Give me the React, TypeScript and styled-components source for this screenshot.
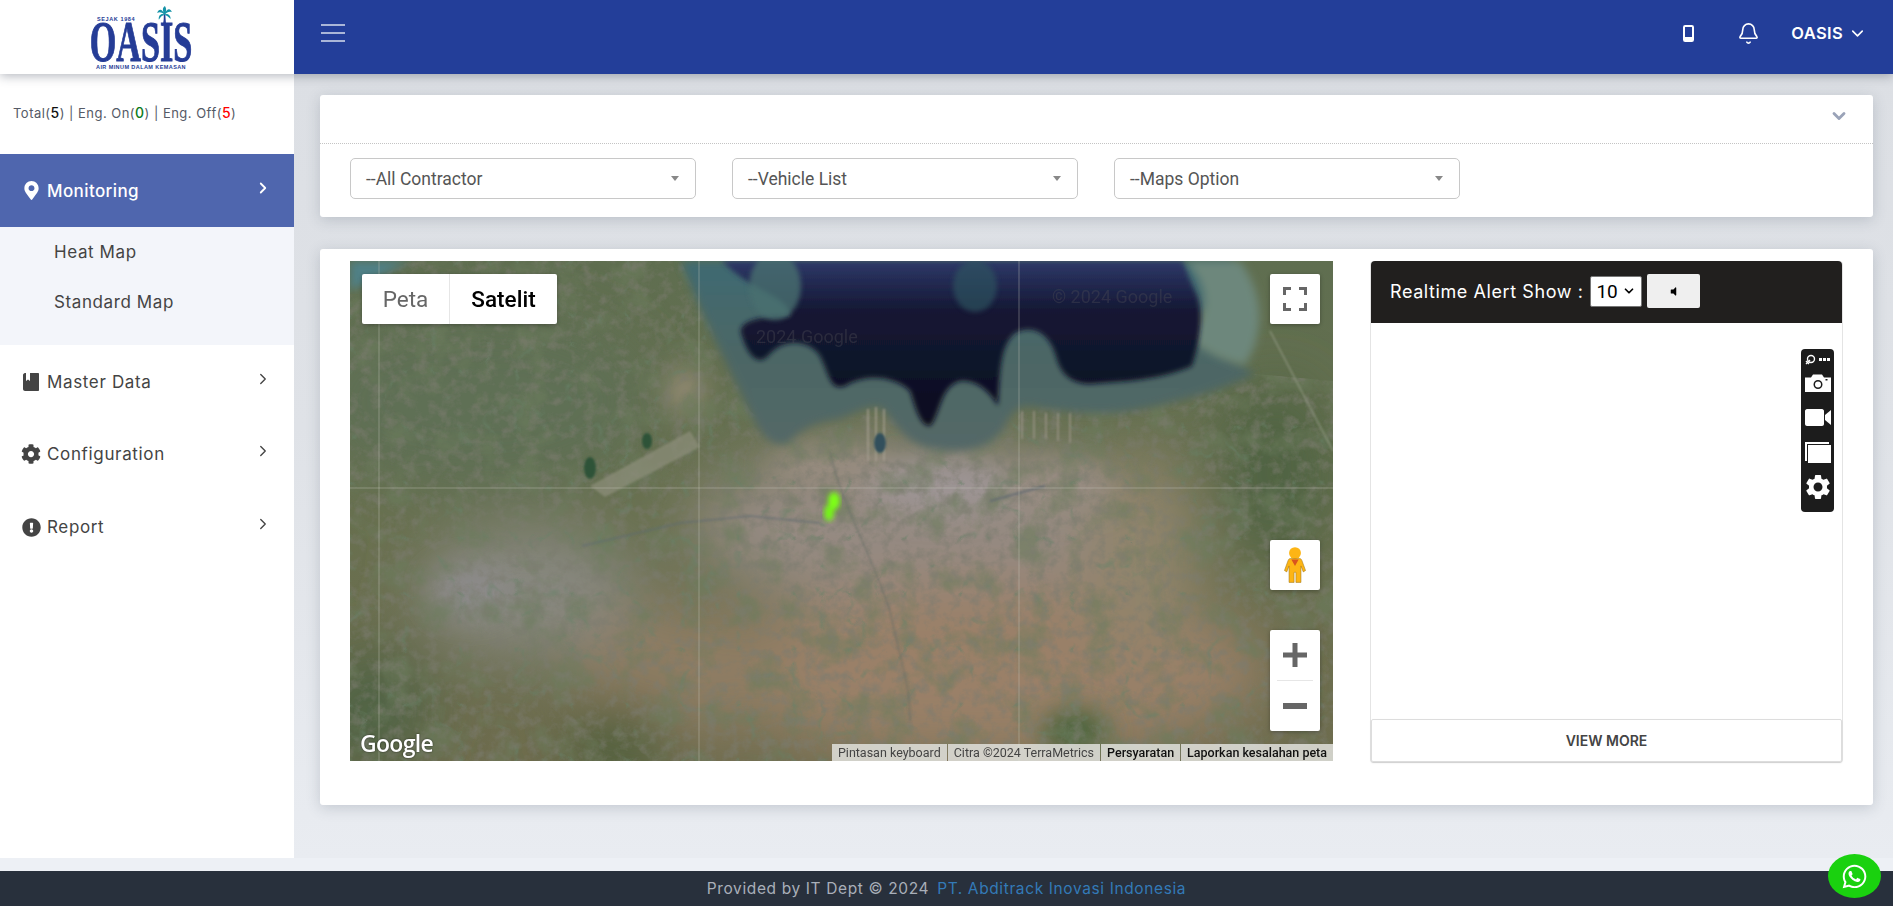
import styled, { createGlobalStyle } from "styled-components";
import { FaCog, FaExclamationCircle, FaMapMarkerAlt, FaVolumeOff, FaWhatsapp } from "react-icons/fa";
import { MdSettings } from "react-icons/md";
import { Bell, ChevronDown, ChevronRight } from "lucide-react";

const GlobalStyle = createGlobalStyle`
    html, body {
        margin: 0;
        padding: 0;
        height: 100%;
        overflow: hidden;
        font-family: Inter, "Open Sans", sans-serif;
    }
    * {
        box-sizing: border-box;
    }
`
const Page = styled.div`
    display: flex;
    flex-direction: column;
    width: 100vw;
    height: 100vh;
    background-color: #edf0f5;
`
const TopBar = styled.header`
    display: flex;
    flex: 0 0 74px;
    position: relative;
    z-index: 3;
    box-shadow: 0 2px 10px rgba(40, 50, 70, 0.35);
`
const LogoBox = styled.div`
    display: flex;
    justify-content: center;
    align-items: center;
    width: 294px;
    padding-right: 12px;
    background-color: #fff;
`
const Logo = styled.div`
    display: flex;
    flex-direction: column;
    width: 104px;
    margin-top: 1px;
    color: #253c96;
`
const LogoTop = styled.div`
    display: flex;
    align-items: flex-end;
    justify-content: space-between;
    height: 16px;
    padding: 0 20px 0 8px;
`
const LogoSmall = styled.span`
    font-family: "Liberation Sans", sans-serif;
    font-size: 5.5px;
    font-weight: 700;
    letter-spacing: 0.6px;
    white-space: nowrap;
`
const LogoWord = styled.div`
    width: 172px;
    height: 39px;
    margin-left: -34px;
    font-family: "Liberation Serif", serif;
    font-size: 57px;
    line-height: 39px;
    font-weight: 700;
    text-align: center;
    white-space: nowrap;
    -webkit-text-stroke: 1px #253c96;
    transform: scaleX(0.6);
    transform-origin: center;
`
const LogoTag = styled(LogoSmall)`
    margin-top: 3px;
    line-height: 6px;
    text-align: center;
    letter-spacing: 0.42px;
`
const NavBar = styled.div`
    display: flex;
    flex: 1;
    align-items: center;
    justify-content: space-between;
    padding: 0 26px 0 27px;
    background-color: #233e99;
    color: #fff;
`
const Hamburger = styled.div`
    display: flex;
    flex-direction: column;
    gap: 6px;
    width: 24px;
    margin-top: -9px;

    span {
        display: block;
        height: 2px;
        background-color: #aab6d8;
    }
`
const NavRight = styled.div`
    display: flex;
    align-items: center;
    margin-top: -8px;
`
const NavIcon = styled.span<{ $gap: number }>`
    display: flex;
    margin-right: ${(p) => p.$gap}px;
`
const UserName = styled.span`
    margin-right: 5px;
    font-size: 16.5px;
    font-weight: 600;
    letter-spacing: 0.35px;
`
const Body = styled.div`
    display: flex;
    flex: 1;
    min-height: 0;
`
const Sidebar = styled.aside`
    display: flex;
    flex-direction: column;
    flex: 0 0 294px;
    background-color: #fff;
    color: #444;
    position: relative;
    z-index: 2;
`
const Counter = styled.div`
    height: 80px;
    padding: 30px 0 0 13px;
    font-size: 13px;
    line-height: 18px;
    letter-spacing: 0.48px;
    color: #555a66;
    white-space: nowrap;
`
const Count = styled.span<{ $color: string }>`
    font-size: 14px;
    font-weight: 500;
    color: ${(p) => p.$color};
`
const MenuItem = styled.div<{ $active?: boolean; $height: number }>`
    display: flex;
    align-items: center;
    height: ${(p) => p.$height}px;
    padding: 0 22px 0 21px;
    font-size: 17px;
    font-weight: ${(p) => (p.$active ? 500 : 400)};
    letter-spacing: ${(p) => (p.$active ? 0.4 : 0.65)}px;
    background-color: ${(p) => (p.$active ? "#4f66ae" : "transparent")};
    color: ${(p) => (p.$active ? "#fff" : "#444")};
`
const MenuIcon = styled.span<{ $size: number }>`
    display: flex;
    justify-content: center;
    flex: 0 0 20px;
    margin-right: 6px;
    font-size: ${(p) => p.$size}px;
`
const MenuLabel = styled.span`
    flex: 1;
`
const MenuArrow = styled.span`
    display: flex;
    margin-top: -6px;
`
const SubMenu = styled.div`
    display: flex;
    flex-direction: column;
    height: 118px;
    background-color: #f3f5fa;
`
const SubItem = styled.div`
    display: flex;
    align-items: center;
    height: 50px;
    padding-left: 54px;
    font-size: 17px;
    letter-spacing: 0.6px;
    color: #444;
`
const Main = styled.main`
    flex: 1;
    min-width: 0;
    padding: 21px 20px 0 26px;
    background: linear-gradient(180deg, #dcdfe4 0%, #dfe2e7 45%, #e9ecf1 100%);
`
const Card = styled.section`
    background-color: #fff;
    border-radius: 3px;
    box-shadow: 0 3px 14px rgba(70, 80, 100, 0.22);
`
const FilterCard = styled(Card)`
    margin-bottom: 32px;
`
const FilterHead = styled.div`
    display: flex;
    align-items: center;
    justify-content: flex-end;
    height: 49px;
    padding: 0 24px 6px 0;
    border-bottom: 1px dotted #c4c4c4;
    color: #9aa3b8;
`
const FilterBody = styled.div`
    display: flex;
    gap: 36px;
    padding: 14px 26px 18px 30px;
`
const FakeSelect = styled.div`
    display: flex;
    align-items: center;
    justify-content: space-between;
    width: 346px;
    height: 41px;
    padding: 0 16px 0 15px;
    border: 1px solid #c8c8c8;
    border-radius: 5px;
    font-family: Roboto, sans-serif;
    font-size: 17.5px;
    color: #555;

    &::after {
        content: "";
        border-style: solid;
        border-width: 5px 4px 0 4px;
        border-color: #888 transparent transparent transparent;
    }
`
const MapCard = styled(Card)`
    display: flex;
    gap: 37px;
    height: 556px;
    padding: 12px 30px 0 30px;
`
const MapBox = styled.div`
    position: relative;
    flex: 0 0 983px;
    height: 500px;
    overflow: hidden;
    background-color: #6d7a5a;
`
const MapDrawing = styled.svg`
    display: block;
    width: 100%;
    height: 100%;
`
const MapType = styled.div`
    position: absolute;
    top: 13px;
    left: 12px;
    display: flex;
    height: 50px;
    border-radius: 2px;
    background-color: #fff;
    box-shadow: 0 1px 4px rgba(0, 0, 0, 0.3);
    font-family: Roboto, sans-serif;
    font-size: 22.5px;
`
const MapTypeItem = styled.div<{ $active?: boolean }>`
    display: flex;
    align-items: center;
    justify-content: center;
    width: ${(p) => (p.$active ? 108 : 87)}px;
    font-weight: ${(p) => (p.$active ? 500 : 400)};
    color: ${(p) => (p.$active ? "#000" : "#666")};
    border-left: ${(p) => (p.$active ? "1px solid #e6e6e6" : "none")};
`
const MapButton = styled.div<{ $top: number }>`
    position: absolute;
    top: ${(p) => p.$top}px;
    right: 13px;
    display: flex;
    align-items: center;
    justify-content: center;
    width: 50px;
    height: 50px;
    border-radius: 2px;
    background-color: #fff;
    box-shadow: 0 1px 4px rgba(0, 0, 0, 0.3);
`
const ZoomControl = styled.div`
    position: absolute;
    top: 369px;
    right: 13px;
    display: flex;
    flex-direction: column;
    align-items: center;
    width: 50px;
    height: 101px;
    border-radius: 2px;
    background-color: #fff;
    box-shadow: 0 1px 4px rgba(0, 0, 0, 0.3);
`
const ZoomPart = styled.div`
    display: flex;
    align-items: center;
    justify-content: center;
    flex: 1;
`
const ZoomLine = styled.div`
    width: 36px;
    height: 1px;
    background-color: #e6e6e6;
`
const GoogleMark = styled.div`
    position: absolute;
    left: 10px;
    bottom: 2px;
    font-family: "Open Sans", sans-serif;
    font-size: 23px;
    font-weight: 600;
    letter-spacing: -0.7px;
    color: #fff;
    text-shadow: 0 0 2px rgba(0, 0, 0, 0.7);
`
const Attribution = styled.div`
    position: absolute;
    right: 0;
    bottom: 0;
    display: flex;
    height: 17px;
    font-family: Roboto, sans-serif;
    font-size: 12.5px;
    line-height: 17px;
`
const AttrItem = styled.span<{ $strong?: boolean }>`
    padding: 0 6px;
    margin-left: 1px;
    background-color: rgba(225, 225, 220, 0.85);
    color: ${(p) => (p.$strong ? "#111" : "#444")};
    font-weight: ${(p) => (p.$strong ? 500 : 400)};
    white-space: nowrap;
`
const AlertPanel = styled.div`
    position: relative;
    display: flex;
    flex-direction: column;
    width: 473px;
    height: 502px;
    border: 1px solid #e4e4e4;
    border-top: none;
    border-radius: 4px;
`
const AlertHead = styled.div`
    display: flex;
    align-items: center;
    flex: 0 0 62px;
    padding: 0 0 2px 19px;
    background-color: #211f1e;
    border-radius: 4px 4px 0 0;
    color: #fff;
    font-size: 18px;
`
const AlertTitle = styled.span`
    letter-spacing: 0.58px;
    margin-right: 7px;
`
const SmallSelect = styled.div`
    display: flex;
    align-items: center;
    justify-content: space-between;
    width: 52px;
    height: 31px;
    padding: 0 5px 0 5px;
    background-color: #fff;
    border: 1px solid #767676;
    border-radius: 2px;
    font-family: Roboto, sans-serif;
    font-size: 19px;
    color: #000;
`
const MuteButton = styled.div`
    display: flex;
    align-items: center;
    justify-content: center;
    width: 53px;
    height: 34px;
    margin-left: 5px;
    background-color: #efefef;
    border-radius: 2px;
    color: #000;
    font-size: 11px;
`
const AlertBody = styled.div`
    flex: 1;
`
const ViewMore = styled.div`
    display: flex;
    align-items: center;
    justify-content: center;
    height: 43px;
    border: 1px solid #ddd;
    border-radius: 2px;
    box-shadow: 0 1px 2px rgba(0, 0, 0, 0.1);
    font-size: 14px;
    font-weight: 600;
    color: #444;
`
const FloatTools = styled.div`
    position: absolute;
    top: 88px;
    right: 8px;
    display: flex;
    flex-direction: column;
    align-items: center;
    width: 33px;
    height: 163px;
    padding-top: 5px;
    border-radius: 4px;
    background-color: #1c1c1c;
    color: #fff;
`
const ToolTop = styled.div`
    display: flex;
    align-items: center;
    gap: 3px;
    height: 11px;
    margin-bottom: 1px;
`
const ToolIcon = styled.span<{ $size: number }>`
    display: flex;
    justify-content: center;
    align-items: center;
    height: 34.5px;
    font-size: ${(p) => p.$size}px;
`
const Footer = styled.footer`
    display: flex;
    align-items: center;
    justify-content: center;
    gap: 8px;
    flex: 0 0 35px;
    margin-top: 13px;
    background-color: #28303c;
    color: #a9afb9;
    font-size: 15.5px;
    letter-spacing: 0.62px;
`
const FooterLink = styled.span`
    color: #337ab7;
`
const ChatBubble = styled.div`
    position: absolute;
    right: 12px;
    bottom: 8px;
    z-index: 4;
    display: flex;
    align-items: center;
    justify-content: center;
    width: 53px;
    height: 44px;
    border-radius: 50%;
    background-color: #1ad10f;
    color: #fff;
    font-size: 27px;
`

const PalmTree = () => (
    <svg width="17" height="19" viewBox="0 0 17 22" style={{ marginBottom: -3 }}>
        <path d="M7.500 9 C8 14 7.500 18 6.500 22 L10.500 22 C10 18 9.500 13 9.500 9 Z" fill="#253c96" />
        <path d="M8.500 10 C6 3 2 3 0 8 C3 6.500 5 7 8.500 10 Z M8.500 10 C5 8 1 11 2 16 C4 12 6 11 8.500 10 Z M8.500 10 C6 5 6 2 9 0 C11 3 11 6 8.500 10 Z M8.500 10 C11 3 15 2 17 7 C14 6 11.500 7 8.500 10 Z M8.500 10 C12 8 16 11 15.500 15 C13 12 11 11 8.500 10 Z" fill="#1593a8" />
    </svg>
)

const SatelliteMap = () => (
    <MapDrawing viewBox="0 0 983 500" preserveAspectRatio="none">
        <defs>
            <linearGradient id="landBase" x1="0" y1="0" x2="0" y2="1">
                <stop offset="0" stopColor="#5f6e50" />
                <stop offset="0.5" stopColor="#68704f" />
                <stop offset="1" stopColor="#6e6c4e" />
            </linearGradient>
            <linearGradient id="deepSea" x1="0" y1="0" x2="0" y2="1">
                <stop offset="0" stopColor="#2e3868" />
                <stop offset="0.3" stopColor="#141834" />
                <stop offset="1" stopColor="#0b0d1e" />
            </linearGradient>
            <linearGradient id="shallowSea" x1="0" y1="0" x2="0" y2="1">
                <stop offset="0" stopColor="#3f6a72" />
                <stop offset="0.5" stopColor="#4c6665" />
                <stop offset="1" stopColor="#546867" />
            </linearGradient>
            <filter id="blur30"><feGaussianBlur stdDeviation="30" /></filter>
            <filter id="blur14"><feGaussianBlur stdDeviation="14" /></filter>
            <filter id="blur4"><feGaussianBlur stdDeviation="4" /></filter>
            <filter id="blur2"><feGaussianBlur stdDeviation="2.500" /></filter>
            <filter id="blur1"><feGaussianBlur stdDeviation="0.800" /></filter>
            <filter id="veins" x="0" y="0" width="100%" height="100%">
                <feTurbulence type="turbulence" baseFrequency="0.018" numOctaves="4" seed="7" />
                <feColorMatrix values="0 0 0 0 0.14  0 0 0 0 0.22  0 0 0 0 0.14  -9 0 0 0 1.25" />
            </filter>
            <filter id="patches" x="0" y="0" width="100%" height="100%">
                <feTurbulence type="fractalNoise" baseFrequency="0.03" numOctaves="6" seed="23" />
                <feColorMatrix values="0 0 0 0 0.15  0 0 0 0 0.2  0 0 0 0 0.11  3.4 0 0 0 -1.6" />
            </filter>
            <filter id="speckle" x="0" y="0" width="100%" height="100%">
                <feTurbulence type="fractalNoise" baseFrequency="0.09" numOctaves="4" seed="11" />
                <feColorMatrix values="0 0 0 0 0.2  0 0 0 0 0.2  0 0 0 0 0.16  2.6 0 0 0 -1.15" />
            </filter>
            <clipPath id="landOnly">
                <path d="M0 30 L60 0 L331 0 L400 150 L440 180 L490 158 L535 150 L585 188 L655 165 L680 145 L790 148 L905 113 L983 120 L983 500 L0 500 Z" />
            </clipPath>
        </defs>
        <rect width="983" height="500" fill="url(#landBase)" />

        {/* urban and dry land */}
        <g filter="url(#blur30)">
            <ellipse cx="570" cy="265" rx="230" ry="80" fill="#958a82" />
            <ellipse cx="180" cy="330" rx="110" ry="65" fill="#87877f" />
            <ellipse cx="640" cy="410" rx="280" ry="90" fill="#9a8068" />
            <ellipse cx="330" cy="410" rx="110" ry="65" fill="#8f7d64" />
            <ellipse cx="790" cy="290" rx="60" ry="100" fill="#90846c" />
            <ellipse cx="925" cy="210" rx="55" ry="90" fill="#4f6443" />
            <ellipse cx="130" cy="140" rx="170" ry="90" fill="#5f7054" />
            <ellipse cx="20" cy="450" rx="60" ry="60" fill="#4f6344" />
            <ellipse cx="270" cy="480" rx="50" ry="40" fill="#485d38" />
        </g>
        <g filter="url(#blur14)">
            <ellipse cx="590" cy="225" rx="75" ry="26" fill="#9d9494" />
            <ellipse cx="480" cy="205" rx="60" ry="20" fill="#988c80" />
            <ellipse cx="710" cy="225" rx="55" ry="26" fill="#988c82" />
            <ellipse cx="335" cy="130" rx="18" ry="24" fill="#9a8e78" />
            <ellipse cx="120" cy="330" rx="40" ry="26" fill="#8c8a8a" />
            <ellipse cx="725" cy="470" rx="34" ry="22" fill="#46633a" />
        </g>
        <rect width="983" height="500" filter="url(#patches)" opacity="0.6" clipPath="url(#landOnly)" />
        <rect width="983" height="500" filter="url(#veins)" opacity="0.5" clipPath="url(#landOnly)" />
        <rect width="983" height="500" filter="url(#speckle)" opacity="0.6" clipPath="url(#landOnly)" />

        {/* shallow water and deep bay */}
        <path d="M0 0 L60 0 L0 30 Z" fill="#4f8086" filter="url(#blur4)" />
        <path d="M331 0 C350 50 380 110 400 150 C410 175 425 190 440 180 C455 165 470 160 490 158 C510 150 525 140 535 150 C550 170 560 185 585 188 C610 192 640 190 655 165 C662 150 668 145 680 145 C720 152 760 155 790 148 C830 140 870 130 905 113 C880 95 845 85 840 65 C850 45 885 45 892 30 L880 0 Z" fill="url(#shallowSea)" filter="url(#blur4)" />
        <path d="M835 0 C860 25 860 55 838 72 C850 92 875 100 895 104 C912 78 918 38 890 0 Z" fill="#6d877c" filter="url(#blur4)" />
        <path d="M372 0 C400 30 440 35 440 55 C410 55 385 60 392 75 C398 95 408 105 418 95 C435 75 460 80 470 95 C480 115 480 130 495 125 C515 112 545 115 560 130 C565 145 570 165 580 165 C590 155 590 125 610 120 C625 118 640 130 648 145 C650 110 650 85 665 72 C685 62 700 75 706 95 C712 120 730 125 750 122 C790 120 820 115 842 105 C850 80 855 50 845 30 C838 15 835 5 832 0 Z" fill="url(#deepSea)" filter="url(#blur2)" />
        <ellipse cx="625" cy="25" rx="22" ry="26" fill="#2d5560" opacity="0.65" filter="url(#blur2)" />
        <ellipse cx="425" cy="25" rx="26" ry="34" fill="#4a6f70" opacity="0.8" filter="url(#blur2)" />

        {/* port, airport and river details */}
        <g fill="none" filter="url(#blur1)">
            <path d="M518 148 L518 200 M526 146 L526 200 M534 148 L534 200" stroke="#a99f92" strokeWidth="2" opacity="0.7" />
            <path d="M672 150 L672 178 M684 150 L684 178 M696 152 L696 178 M708 152 L708 180 M720 152 L720 182" stroke="#9c9488" strokeWidth="2" opacity="0.7" />
            <path d="M240 225 L340 170 L350 186 L255 236 Z" fill="#8d8f7a" stroke="none" opacity="0.7" />
            <path d="M232 285 L330 262 L400 255 L470 262" stroke="#5d6a70" strokeWidth="1.500" opacity="0.7" />
            <path d="M640 240 L695 225" stroke="#5f6870" strokeWidth="2.500" opacity="0.7" />
            <path d="M480 190 C490 240 520 290 540 350 C550 400 560 420 560 460" stroke="#5b6860" strokeWidth="1.500" opacity="0.5" />
            <path d="M920 70 L983 190" stroke="#98a08a" strokeWidth="1.500" opacity="0.7" />
        </g>
        <ellipse cx="240" cy="207" rx="6" ry="11" fill="#2f5338" filter="url(#blur1)" />
        <ellipse cx="297" cy="180" rx="5" ry="8" fill="#2f5338" filter="url(#blur1)" />
        <ellipse cx="530" cy="182" rx="6" ry="10" fill="#33505c" filter="url(#blur1)" />

        {/* tile seams */}
        <g stroke="#c8c8c0" strokeOpacity="0.4" strokeWidth="1">
            <path d="M29 0 V500 M349 0 V500 M669 0 V500 M0 227 H983" />
        </g>

        {/* watermarks */}
        <g fontFamily="Roboto, sans-serif" fontSize="18" fill="#4a4a55" fillOpacity="0.4">
            <text x="406" y="82">2024 Google</text>
            <text x="702" y="42">© 2024 Google</text>
        </g>

        {/* heat spot */}
        <g filter="url(#blur2)">
            <ellipse cx="484" cy="240" rx="6" ry="9" fill="#7dff12" />
            <ellipse cx="479" cy="252" rx="5" ry="8" fill="#74f516" />
        </g>
    </MapDrawing>
)

const Pegman = () => (
    <svg width="22" height="38" viewBox="0 0 24 40">
        <circle cx="12" cy="7" r="6.500" fill="#fdb515" />
        <path d="M7 13 H17 C18.500 13 19 14 19.500 15 L23.500 26 L21 27.500 L18.500 21 V39 H13 V28 H11 V39 H5.500 V21 L3 27.500 L0.500 26 L4.500 15 C5 14 5.500 13 7 13 Z" fill="#fdb515" stroke="#a0761a" strokeWidth="0.6" />
        <path d="M8 14 H16 L12 21 Z" fill="#d9541e" />
    </svg>
)

const BookIcon = () => (
    <svg width="16" height="18" viewBox="0 0 16 18" fill="currentColor">
        <path d="M2 0 H3 V8 L5 6.500 L7 8 V0 H15 C15.600 0 16 0.400 16 1 V17 C16 17.600 15.600 18 15 18 H2 C1 18 0 17 0 16 V2 C0 1 1 0 2 0 Z" />
    </svg>
)

const PhoneIcon = () => (
    <svg width="11" height="17" viewBox="0 0 11 17" fill="none" stroke="#fff">
        <rect x="1" y="1" width="9" height="15" rx="1.200" strokeWidth="2" />
        <path d="M1 13.500 H10" strokeWidth="3" />
    </svg>
)

const CameraIcon = () => (
    <svg width="26" height="18" viewBox="0 0 26 18">
        <path fillRule="evenodd" fill="#fff" d="M0 3.500 H6 L8 0.500 H17 L19 3.500 H26 V18 H0 Z M13 6 A4.500 4.500 0 1 0 13 15 A4.500 4.500 0 1 0 13 6 Z M13 7.500 A3 3 0 1 1 13 13.500 A3 3 0 1 1 13 7.500 Z" />
        <rect x="20.500" y="5" width="2" height="1.500" fill="#1c1c1c" />
    </svg>
)

const VideoIcon = () => (
    <svg width="26" height="17" viewBox="0 0 26 17" fill="#fff">
        <path d="M2 0 H17 C18 0 19 1 19 2 V15 C19 16 18 17 17 17 H2 C1 17 0 16 0 15 V2 C0 1 1 0 2 0 Z" />
        <path d="M20 6 L26 1 V16 L20 11 Z" />
    </svg>
)

const StackedWindows = () => (
    <svg width="26" height="21" viewBox="0 0 26 21" fill="#fff">
        <path d="M0 0 H24 V2 H2 V19 H0 Z" />
        <path d="M3 3 H26 V21 H3 Z" />
    </svg>
)

const TinyLink = () => (
    <svg width="11" height="11" viewBox="0 0 11 11" fill="none" stroke="#fff" strokeWidth="1.400">
        <circle cx="6" cy="5" r="3.500" />
        <path d="M1 10 L5 6 M1 7 L4 10" />
    </svg>
)

export default function App() {
    return (
        <Page>
            <GlobalStyle />
            <TopBar>
                <LogoBox>
                    <Logo>
                        <LogoTop>
                            <LogoSmall>SEJAK 1984</LogoSmall>
                            <PalmTree />
                        </LogoTop>
                        <LogoWord>OASIS</LogoWord>
                        <LogoTag>AIR MINUM DALAM KEMASAN</LogoTag>
                    </Logo>
                </LogoBox>
                <NavBar>
                    <Hamburger>
                        <span />
                        <span />
                        <span />
                    </Hamburger>
                    <NavRight>
                        <NavIcon $gap={43}>
                            <PhoneIcon />
                        </NavIcon>
                        <NavIcon $gap={31}>
                            <Bell size={23} strokeWidth={1.7} />
                        </NavIcon>
                        <UserName>OASIS</UserName>
                        <ChevronDown size={19} strokeWidth={2} />
                    </NavRight>
                </NavBar>
            </TopBar>
            <Body>
                <Sidebar>
                    <Counter>
                        Total(<Count $color="#111">5</Count>) | Eng. On(<Count $color="#0a7a1a">0</Count>) | Eng. Off(<Count $color="#f00">5</Count>)
                    </Counter>
                    <MenuItem $active $height={73}>
                        <MenuIcon $size={19}><FaMapMarkerAlt /></MenuIcon>
                        <MenuLabel>Monitoring</MenuLabel>
                        <MenuArrow><ChevronRight size={18} strokeWidth={2.4} /></MenuArrow>
                    </MenuItem>
                    <SubMenu>
                        <SubItem>Heat Map</SubItem>
                        <SubItem>Standard Map</SubItem>
                    </SubMenu>
                    <MenuItem $height={73}>
                        <MenuIcon $size={18}><BookIcon /></MenuIcon>
                        <MenuLabel>Master Data</MenuLabel>
                        <MenuArrow><ChevronRight size={18} strokeWidth={1.8} /></MenuArrow>
                    </MenuItem>
                    <MenuItem $height={72}>
                        <MenuIcon $size={20}><FaCog /></MenuIcon>
                        <MenuLabel>Configuration</MenuLabel>
                        <MenuArrow><ChevronRight size={18} strokeWidth={1.8} /></MenuArrow>
                    </MenuItem>
                    <MenuItem $height={74}>
                        <MenuIcon $size={19}><FaExclamationCircle /></MenuIcon>
                        <MenuLabel>Report</MenuLabel>
                        <MenuArrow><ChevronRight size={18} strokeWidth={1.8} /></MenuArrow>
                    </MenuItem>
                </Sidebar>
                <Main>
                    <FilterCard>
                        <FilterHead>
                            <ChevronDown size={20} strokeWidth={3.4} />
                        </FilterHead>
                        <FilterBody>
                            <FakeSelect>--All Contractor</FakeSelect>
                            <FakeSelect>--Vehicle List</FakeSelect>
                            <FakeSelect>--Maps Option</FakeSelect>
                        </FilterBody>
                    </FilterCard>
                    <MapCard>
                        <MapBox>
                            <SatelliteMap />
                            <MapType>
                                <MapTypeItem>Peta</MapTypeItem>
                                <MapTypeItem $active>Satelit</MapTypeItem>
                            </MapType>
                            <MapButton $top={13}>
                                <svg width="24" height="24" viewBox="0 0 24 24" fill="none" stroke="#666" strokeWidth="3">
                                    <path d="M1.500 8 V1.500 H8 M16 1.500 H22.500 V8 M22.500 16 V22.500 H16 M8 22.500 H1.500 V16" />
                                </svg>
                            </MapButton>
                            <MapButton $top={279}>
                                <Pegman />
                            </MapButton>
                            <ZoomControl>
                                <ZoomPart>
                                    <svg width="24" height="24" viewBox="0 0 24 24" fill="#666">
                                        <path d="M9.500 0 H14.500 V9.500 H24 V14.500 H14.500 V24 H9.500 V14.500 H0 V9.500 H9.500 Z" />
                                    </svg>
                                </ZoomPart>
                                <ZoomLine />
                                <ZoomPart>
                                    <svg width="24" height="6" viewBox="0 0 24 6" fill="#666">
                                        <rect width="24" height="6" />
                                    </svg>
                                </ZoomPart>
                            </ZoomControl>
                            <GoogleMark>Google</GoogleMark>
                            <Attribution>
                                <AttrItem>Pintasan keyboard</AttrItem>
                                <AttrItem>Citra ©2024 TerraMetrics</AttrItem>
                                <AttrItem $strong>Persyaratan</AttrItem>
                                <AttrItem $strong>Laporkan kesalahan peta</AttrItem>
                            </Attribution>
                        </MapBox>
                        <AlertPanel>
                            <AlertHead>
                                <AlertTitle>Realtime Alert Show :</AlertTitle>
                                <SmallSelect>
                                    10
                                    <ChevronDown size={14} strokeWidth={3} />
                                </SmallSelect>
                                <MuteButton><FaVolumeOff /></MuteButton>
                            </AlertHead>
                            <AlertBody />
                            <ViewMore>VIEW MORE</ViewMore>
                            <FloatTools>
                                <ToolTop>
                                    <TinyLink />
                                    <svg width="11" height="3" viewBox="0 0 11 3" fill="#fff">
                                        <path d="M0 0 H3 V3 H0 Z M4 0 H7 V3 H4 Z M8 0 H11 V3 H8 Z" />
                                    </svg>
                                </ToolTop>
                                <ToolIcon $size={26}><CameraIcon /></ToolIcon>
                                <ToolIcon $size={28}><VideoIcon /></ToolIcon>
                                <ToolIcon $size={26}><StackedWindows /></ToolIcon>
                                <ToolIcon $size={30}><MdSettings /></ToolIcon>
                            </FloatTools>
                        </AlertPanel>
                    </MapCard>
                </Main>
            </Body>
            <Footer>
                <span>Provided by IT Dept © 2024</span>
                <FooterLink>PT. Abditrack Inovasi Indonesia</FooterLink>
            </Footer>
            <ChatBubble><FaWhatsapp /></ChatBubble>
        </Page>
    )
}
